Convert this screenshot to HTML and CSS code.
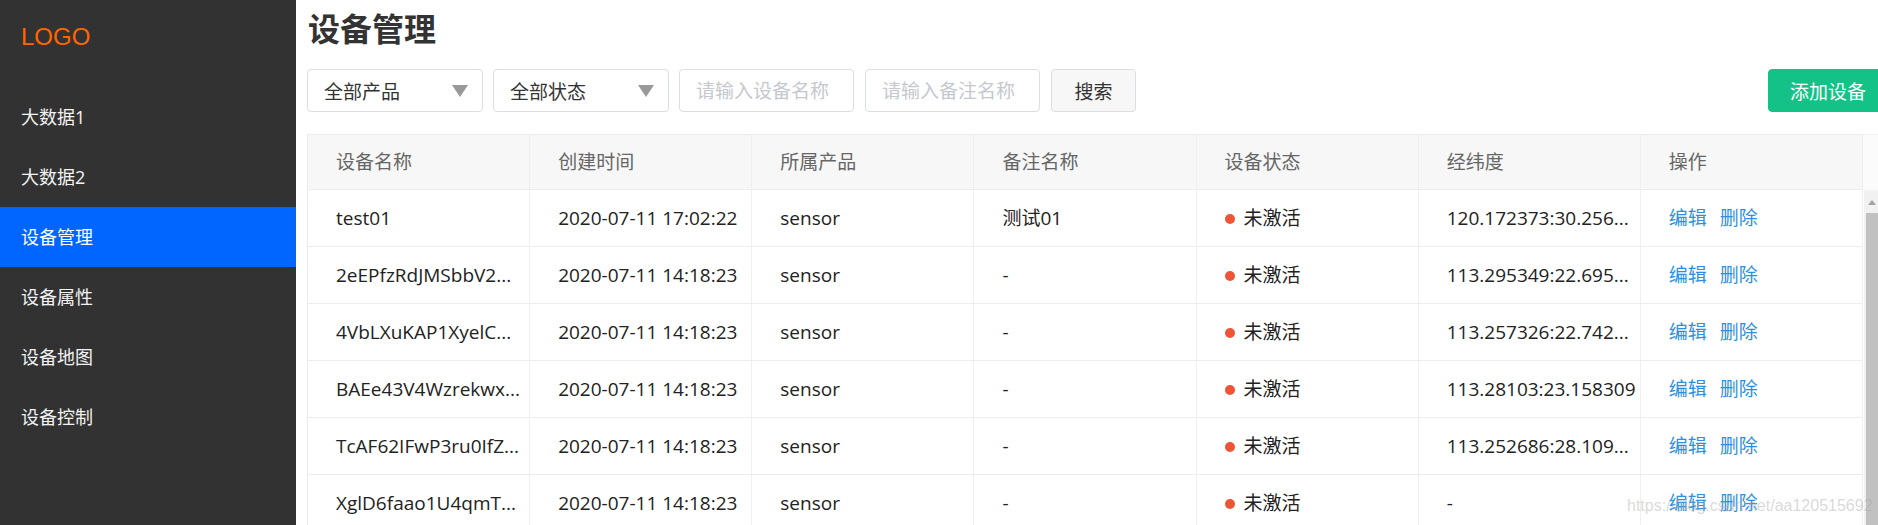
FILE: index.html
```html
<!DOCTYPE html>
<html lang="zh-CN">
<head>
    <meta charset="UTF-8">
    <title>设备管理</title>
    <link rel="stylesheet" href="styles.css">
</head>
<body>

    <!-- Sidebar -->
    <div class="sidebar">
        <div class="logo">LOGO</div>
        <ul class="menu">
            <li class="menu-item">大数据1</li>
            <li class="menu-item">大数据2</li>
            <li class="menu-item active">设备管理</li>
            <li class="menu-item">设备属性</li>
            <li class="menu-item">设备地图</li>
            <li class="menu-item">设备控制</li>
        </ul>
    </div>

    <div class="main">
        <h1 class="page-title">设备管理</h1>

        <!-- Filters -->
        <div class="filter-bar">
            <div class="select">
                <span>全部产品</span>
                <i class="arrow"></i>
            </div>
            <div class="select">
                <span>全部状态</span>
                <i class="arrow"></i>
            </div>
            <input class="text-input" type="text" placeholder="请输入设备名称">
            <input class="text-input" type="text" placeholder="请输入备注名称">
            <button class="btn btn-search">搜索</button>
            <button class="btn btn-add">添加设备</button>
        </div>

        <!-- Device table -->
        <div class="table">
            <div class="table-head">
                <div class="row head-row">
                    <div class="cell">设备名称</div>
                    <div class="cell">创建时间</div>
                    <div class="cell">所属产品</div>
                    <div class="cell">备注名称</div>
                    <div class="cell">设备状态</div>
                    <div class="cell">经纬度</div>
                    <div class="cell">操作</div>
                </div>
                <div class="head-gutter"></div>
            </div>

            <div class="table-body">
                <div class="rows">
                    <div class="row">
                        <div class="cell">test01</div>
                        <div class="cell">2020-07-11 17:02:22</div>
                        <div class="cell">sensor</div>
                        <div class="cell">测试01</div>
                        <div class="cell"><i class="dot"></i>未激活</div>
                        <div class="cell">120.172373:30.256...</div>
                        <div class="cell"><a class="link">编辑</a><a class="link">删除</a></div>
                    </div>
                    <div class="row">
                        <div class="cell">2eEPfzRdJMSbbV2...</div>
                        <div class="cell">2020-07-11 14:18:23</div>
                        <div class="cell">sensor</div>
                        <div class="cell">-</div>
                        <div class="cell"><i class="dot"></i>未激活</div>
                        <div class="cell">113.295349:22.695...</div>
                        <div class="cell"><a class="link">编辑</a><a class="link">删除</a></div>
                    </div>
                    <div class="row">
                        <div class="cell">4VbLXuKAP1XyelC...</div>
                        <div class="cell">2020-07-11 14:18:23</div>
                        <div class="cell">sensor</div>
                        <div class="cell">-</div>
                        <div class="cell"><i class="dot"></i>未激活</div>
                        <div class="cell">113.257326:22.742...</div>
                        <div class="cell"><a class="link">编辑</a><a class="link">删除</a></div>
                    </div>
                    <div class="row">
                        <div class="cell">BAEe43V4Wzrekwx...</div>
                        <div class="cell">2020-07-11 14:18:23</div>
                        <div class="cell">sensor</div>
                        <div class="cell">-</div>
                        <div class="cell"><i class="dot"></i>未激活</div>
                        <div class="cell">113.28103:23.158309</div>
                        <div class="cell"><a class="link">编辑</a><a class="link">删除</a></div>
                    </div>
                    <div class="row">
                        <div class="cell">TcAF62IFwP3ru0IfZ...</div>
                        <div class="cell">2020-07-11 14:18:23</div>
                        <div class="cell">sensor</div>
                        <div class="cell">-</div>
                        <div class="cell"><i class="dot"></i>未激活</div>
                        <div class="cell">113.252686:28.109...</div>
                        <div class="cell"><a class="link">编辑</a><a class="link">删除</a></div>
                    </div>
                    <div class="row">
                        <div class="cell">XglD6faao1U4qmT...</div>
                        <div class="cell">2020-07-11 14:18:23</div>
                        <div class="cell">sensor</div>
                        <div class="cell">-</div>
                        <div class="cell"><i class="dot"></i>未激活</div>
                        <div class="cell">-</div>
                        <div class="cell"><a class="link">编辑</a><a class="link">删除</a></div>
                    </div>
                </div>

                <!-- fake scrollbar -->
                <div class="scrollbar">
                    <i class="scroll-up"></i>
                    <div class="scroll-thumb"></div>
                </div>
            </div>
        </div>
    </div>

    <div class="watermark">https://blog.csdn.net/aa120515692</div>

</body>
</html>
```

FILE: styles.css
```css
/* Page */
body {
    margin: 0;
    display: flex;
    height: 525px;
    overflow: hidden;
    position: relative;
    font-family: "Open Sans", "Noto Sans CJK SC", sans-serif;
    color: #222;
    background: #fff;
}

/* Sidebar */
.sidebar {
    width: 296px;
    flex-shrink: 0;
    background: #323232;
}

.logo {
    height: 74px;
    line-height: 74px;
    margin-bottom: 13px;
    padding-left: 21px;
    font-family: "Liberation Sans", Arial, sans-serif;
    font-size: 24px;
    color: #ff6600;
}

.menu {
    list-style: none;
    margin: 0;
    padding: 0;
}

.menu-item {
    height: 60px;
    line-height: 60px;
    padding-left: 21px;
    font-size: 18px;
    color: #f2f2f2;
}

.menu-item.active {
    background: #0066ff;
    color: #fff;
}

/* Main area */
.main {
    flex: 1;
    min-width: 0;
    padding-left: 11px;
}

.page-title {
    margin: 9px 0 0 1px;
    height: 40px;
    line-height: 40px;
    font-size: 32px;
    font-weight: bold;
    color: #333;
}

/* Filter bar */
.filter-bar {
    display: flex;
    align-items: center;
    margin-top: 20px;
}

.select,
.text-input,
.btn {
    box-sizing: border-box;
    height: 43px;
    border: 1px solid #dcdee2;
    border-radius: 4px;
    font-family: inherit;
    font-size: 19px;
}

.select {
    width: 176px;
    margin-right: 10px;
    padding: 0 14px 0 16px;
    display: flex;
    align-items: center;
    justify-content: space-between;
    color: #333;
}

.arrow {
    width: 0;
    height: 0;
    border-left: 8px solid transparent;
    border-right: 8px solid transparent;
    border-top: 12px solid #999;
}

.text-input {
    width: 175px;
    margin-right: 11px;
    padding: 0 16px;
    color: #333;
    outline: none;
}

.text-input::placeholder {
    color: #c5c8ce;
}

.btn {
    padding: 0;
    cursor: pointer;
}

.btn-search {
    width: 85px;
    background: #f7f7f7;
    color: #333;
}

.btn-add {
    width: 120px;
    margin-left: auto;
    margin-right: -10px;
    border-color: #14c287;
    background: #14c287;
    color: #fff;
}

/* Table */
.table {
    margin-top: 22px;
}

.table-head,
.table-body {
    display: flex;
}

.head-gutter {
    width: 15px;
    background: #fbfbfb;
    border-top: 1px solid #f3f3f3;
}

.rows {
    width: 1556px;
}

.row {
    width: 1556px;
    height: 57px;
    box-sizing: border-box;
    display: grid;
    grid-template-columns: repeat(7, 1fr);
    border-left: 1px solid #ececec;
    border-bottom: 1px solid #ededed;
}

.head-row {
    height: 56px;
    border-top: 1px solid #ececec;
    background: #f7f7f7;
    color: #666;
}

.cell {
    padding: 0 2px 0 28px;
    line-height: 57px;
    font-size: 19px;
    white-space: nowrap;
    overflow: hidden;
    text-overflow: ellipsis;
    border-right: 1px solid #efefef;
}

.head-row .cell {
    line-height: 55px;
}

.dot {
    display: inline-block;
    width: 10px;
    height: 10px;
    margin-right: 9px;
    border-radius: 50%;
    background: #ee5536;
    vertical-align: 1px;
}

.link {
    margin-right: 13px;
    color: #2d8fe0;
    cursor: pointer;
}

/* Scrollbar drawn by hand */
.scrollbar {
    width: 14px;
    margin-left: 1px;
    background: #f1f1f1;
    display: flex;
    flex-direction: column;
    align-items: flex-end;
}

.scroll-up {
    margin: 10px 2px 0 0;
    width: 0;
    height: 0;
    border-left: 4px solid transparent;
    border-right: 4px solid transparent;
    border-bottom: 5px solid #a3a3a3;
}

.scroll-thumb {
    width: 12px;
    flex: 1;
    margin-top: 8px;
    background: #c1c1c1;
}

/* Blog watermark over the screenshot */
.watermark {
    position: absolute;
    left: 1627px;
    top: 497px;
    font-family: "Liberation Sans", Arial, sans-serif;
    font-size: 16px;
    color: rgba(170, 170, 170, 0.45);
    pointer-events: none;
}
```
